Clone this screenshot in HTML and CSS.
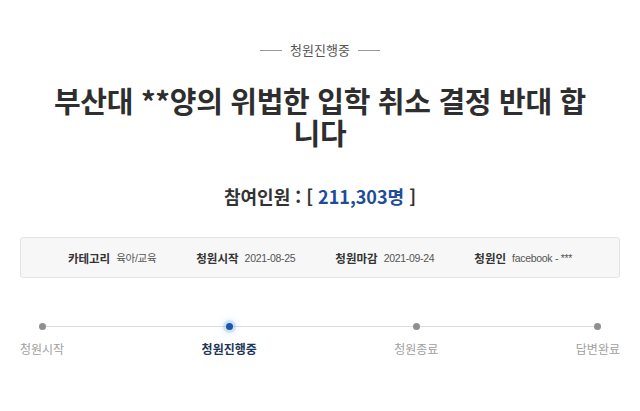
FILE: index.html
```html
<!DOCTYPE html>
<html lang="ko">
<head>
<meta charset="utf-8">
<link rel="stylesheet" href="styles.css">
</head>
<body>
<div class="page">
  <div class="status"><span class="dash"></span><span class="status-text">청원진행중</span><span class="dash"></span></div>
  <h1 class="title">부산대 **양의 위법한 입학 취소 결정 반대 합니다</h1>
  <div class="count">참여인원 : [ <span class="num">211,303명</span> ]</div>
  <div class="info">
    <div class="item"><span class="label">카테고리</span><span class="value">육아/교육</span></div>
    <div class="item"><span class="label">청원시작</span><span class="value">2021-08-25</span></div>
    <div class="item"><span class="label">청원마감</span><span class="value">2021-09-24</span></div>
    <div class="item"><span class="label">청원인</span><span class="value">facebook - ***</span></div>
  </div>
  <div class="progress">
    <div class="track"></div>
    <div class="step"><span class="dot"></span><span class="step-label">청원시작</span></div>
    <div class="step active"><span class="dot"></span><span class="step-label">청원진행중</span></div>
    <div class="step"><span class="dot"></span><span class="step-label">청원종료</span></div>
    <div class="step"><span class="dot"></span><span class="step-label">답변완료</span></div>
  </div>
</div>
</body>
</html>
```
FILE: styles.css
```css
html, body {
  margin: 0;
  padding: 0;
  background: #ffffff;
}
body {
  font-family: "Noto Sans CJK KR", "Noto Sans", sans-serif;
  color: #333;
}
.page {
  width: 600px;
  margin: 0 auto;
  padding-top: 40px;
}
.status {
  display: flex;
  justify-content: center;
  align-items: center;
  gap: 8px;
  height: 20px;
}
.dash {
  width: 22px;
  height: 1px;
  background: #999;
}
.status-text {
  font-size: 13px;
  color: #555;
  line-height: 20px;
}
.title {
  margin: 24px auto 0;
  width: 545px;
  font-size: 29px;
  font-weight: 700;
  line-height: 32px;
  text-align: center;
  color: #2e2e2e;
  letter-spacing: -0.3px;
}
.count {
  margin-top: 36px;
  text-align: center;
  font-size: 18px;
  font-weight: 700;
  line-height: 24px;
  color: #333;
}
.num {
  color: #1f4c98;
}
.info {
  margin-top: 29px;
  height: 41px;
  box-sizing: border-box;
  border: 1px solid #e3e3e3;
  border-radius: 3px;
  background: #f7f7f7;
  display: flex;
  justify-content: center;
  align-items: center;
  gap: 40px;
  font-size: 11.5px;
}
.item {
  display: flex;
  gap: 6px;
  align-items: center;
}
.label {
  font-weight: 700;
  color: #333;
}
.value {
  color: #555;
  font-size: 10.5px;
  letter-spacing: -0.3px;
  font-family: "Liberation Sans", "Noto Sans CJK KR", sans-serif;
}
.progress {
  position: relative;
  margin-top: 45px;
  display: flex;
  justify-content: space-between;
}
.track {
  position: absolute;
  left: 19px;
  right: 21px;
  top: 3px;
  height: 1px;
  background: #dddddd;
}
.step {
  position: relative;
  display: flex;
  flex-direction: column;
  align-items: center;
  gap: 11px;
}
.dot {
  width: 7px;
  height: 7px;
  border-radius: 50%;
  background: #8f8f8f;
}
.step-label {
  font-size: 12px;
  line-height: 16px;
  color: #a0a0a0;
}
.step.active .dot {
  background: #1a56a8;
  box-shadow: 0 0 0 3px rgba(120, 170, 235, 0.25), 0 0 6px 4px rgba(120, 170, 235, 0.2);
}
.step.active .step-label {
  color: #1d3557;
  font-weight: 700;
}
```
